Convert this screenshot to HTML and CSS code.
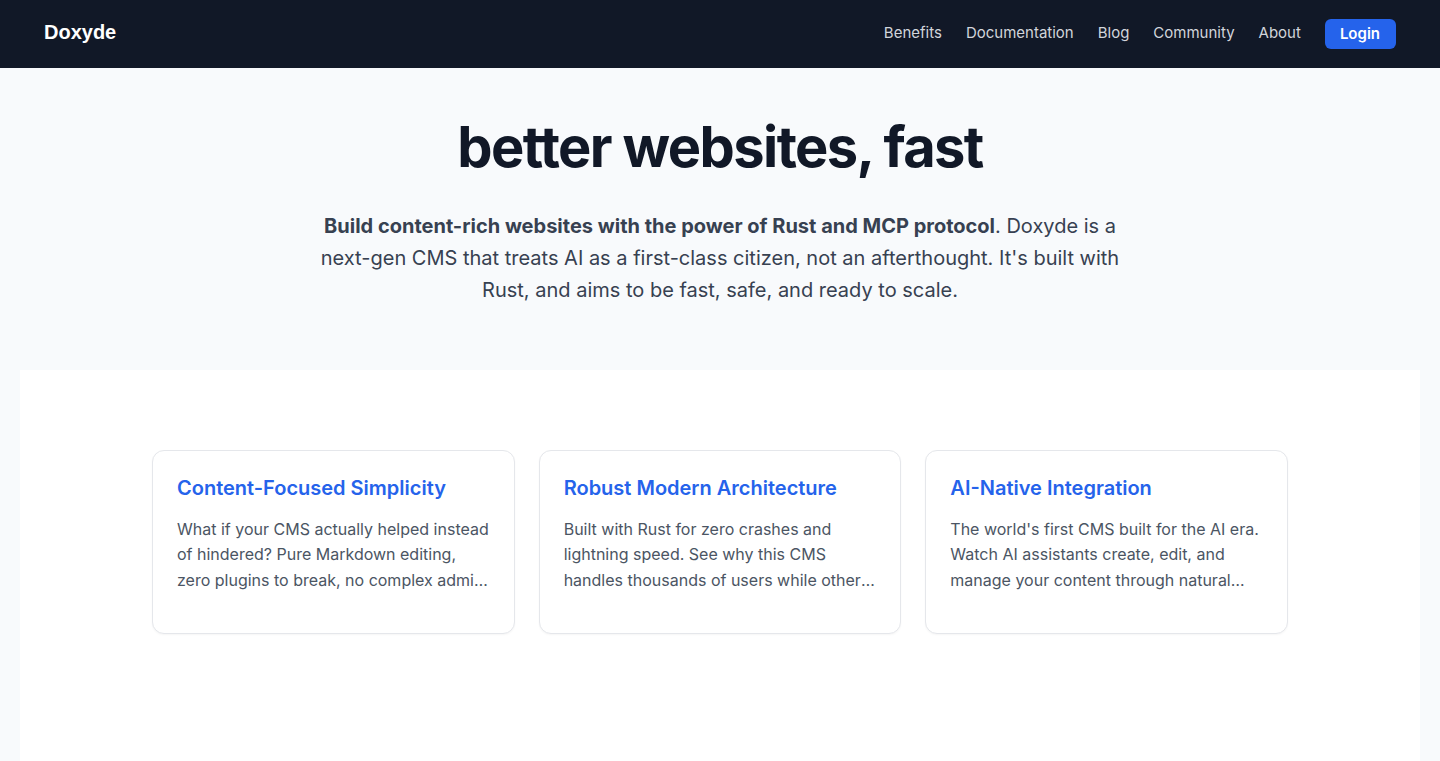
FILE: index.html
```html
<!DOCTYPE html>
<html lang="en">
<head>
  <meta charset="UTF-8">
  <meta name="viewport" content="width=device-width, initial-scale=1.0">
  <title>Doxyde</title>
  <link rel="stylesheet" href="styles.css">
</head>
<body>
  <!-- Top navigation -->
  <header class="topbar">
    <a class="brand" href="#">Doxyde</a>
    <nav class="nav-links">
      <a href="#">Benefits</a>
      <a href="#">Documentation</a>
      <a href="#">Blog</a>
      <a href="#">Community</a>
      <a href="#">About</a>
      <a class="login-btn" href="#">Login</a>
    </nav>
  </header>

  <!-- Hero -->
  <section class="hero">
    <h1>better websites, fast</h1>
    <p class="lead">
      <strong>Build content-rich websites with the power of Rust and MCP protocol</strong>. Doxyde is a next-gen CMS that treats AI as a first-class citizen, not an afterthought. It's built with Rust, and aims to be fast, safe, and ready to scale.
    </p>
  </section>

  <!-- Benefits cards -->
  <section class="benefits">
    <div class="card-grid">
      <div class="card">
        <h3>Content-Focused Simplicity</h3>
        <p>What if your CMS actually helped instead of hindered? Pure Markdown editing, zero plugins to break, no complex admin panels to learn. Just write and publish.</p>
      </div>
      <div class="card">
        <h3>Robust Modern Architecture</h3>
        <p>Built with Rust for zero crashes and lightning speed. See why this CMS handles thousands of users while others struggle with a handful of visitors.</p>
      </div>
      <div class="card">
        <h3>AI-Native Integration</h3>
        <p>The world's first CMS built for the AI era. Watch AI assistants create, edit, and manage your content through natural conversation using the MCP protocol.</p>
      </div>
    </div>
  </section>
</body>
</html>
```

FILE: styles.css
```css
html, body {
  margin: 0;
  padding: 0;
  font-family: Inter, "Noto Sans", sans-serif;
  background-color: #f8fafc;
  color: #111827;
}
a {
  text-decoration: none;
}
/* Dark top bar */
.topbar {
  height: 68px;
  background: #111827;
  display: flex;
  align-items: center;
  justify-content: space-between;
  padding: 0 44px 3px;
  box-sizing: border-box;
}
.brand {
  font-family: "Liberation Sans", Arial, sans-serif;
  font-weight: 700;
  font-size: 20px;
  color: #ffffff;
}
.nav-links {
  display: flex;
  align-items: center;
  gap: 24px;
}
.nav-links a {
  font-size: 15px;
  color: #d1d5db;
}
.nav-links a.login-btn {
  background: #2563eb;
  color: #ffffff;
  font-weight: 600;
  padding: 6px 16px 6px 15px;
  margin-top: 3px;
  border-radius: 6px;
  line-height: 18px;
}
/* Hero block */
.hero {
  padding: 48px 20px 64px;
  text-align: center;
}
.hero h1 {
  margin: 0 0 32px;
  font-size: 56px;
  line-height: 62px;
  font-weight: 700;
  letter-spacing: -1.6px;
  color: #111827;
}
.lead {
  max-width: 800px;
  margin: 0 auto;
  font-size: 20px;
  line-height: 32px;
  color: #374151;
}
.lead strong {
  font-weight: 700;
}
/* White section with the three cards */
.benefits {
  margin: 0 20px;
  background: #ffffff;
  padding: 80px 0 140px;
}
.card-grid {
  max-width: 1136px;
  margin: 0 auto;
  display: grid;
  grid-template-columns: repeat(3, 1fr);
  gap: 24px;
}
.card {
  border: 1px solid #e5e7eb;
  border-radius: 12px;
  padding: 23px 24px 40px;
  background: #ffffff;
  box-shadow: 0 1px 2px rgba(0, 0, 0, 0.04);
}
.card h3 {
  margin: 0 0 15px;
  font-size: 20px;
  line-height: 28px;
  font-weight: 600;
  color: #2563eb;
}
.card p {
  margin: 0;
  font-size: 16px;
  line-height: 25.4px;
  color: #4b5563;
  display: -webkit-box;
  -webkit-line-clamp: 3;
  -webkit-box-orient: vertical;
  overflow: hidden;
}
```
